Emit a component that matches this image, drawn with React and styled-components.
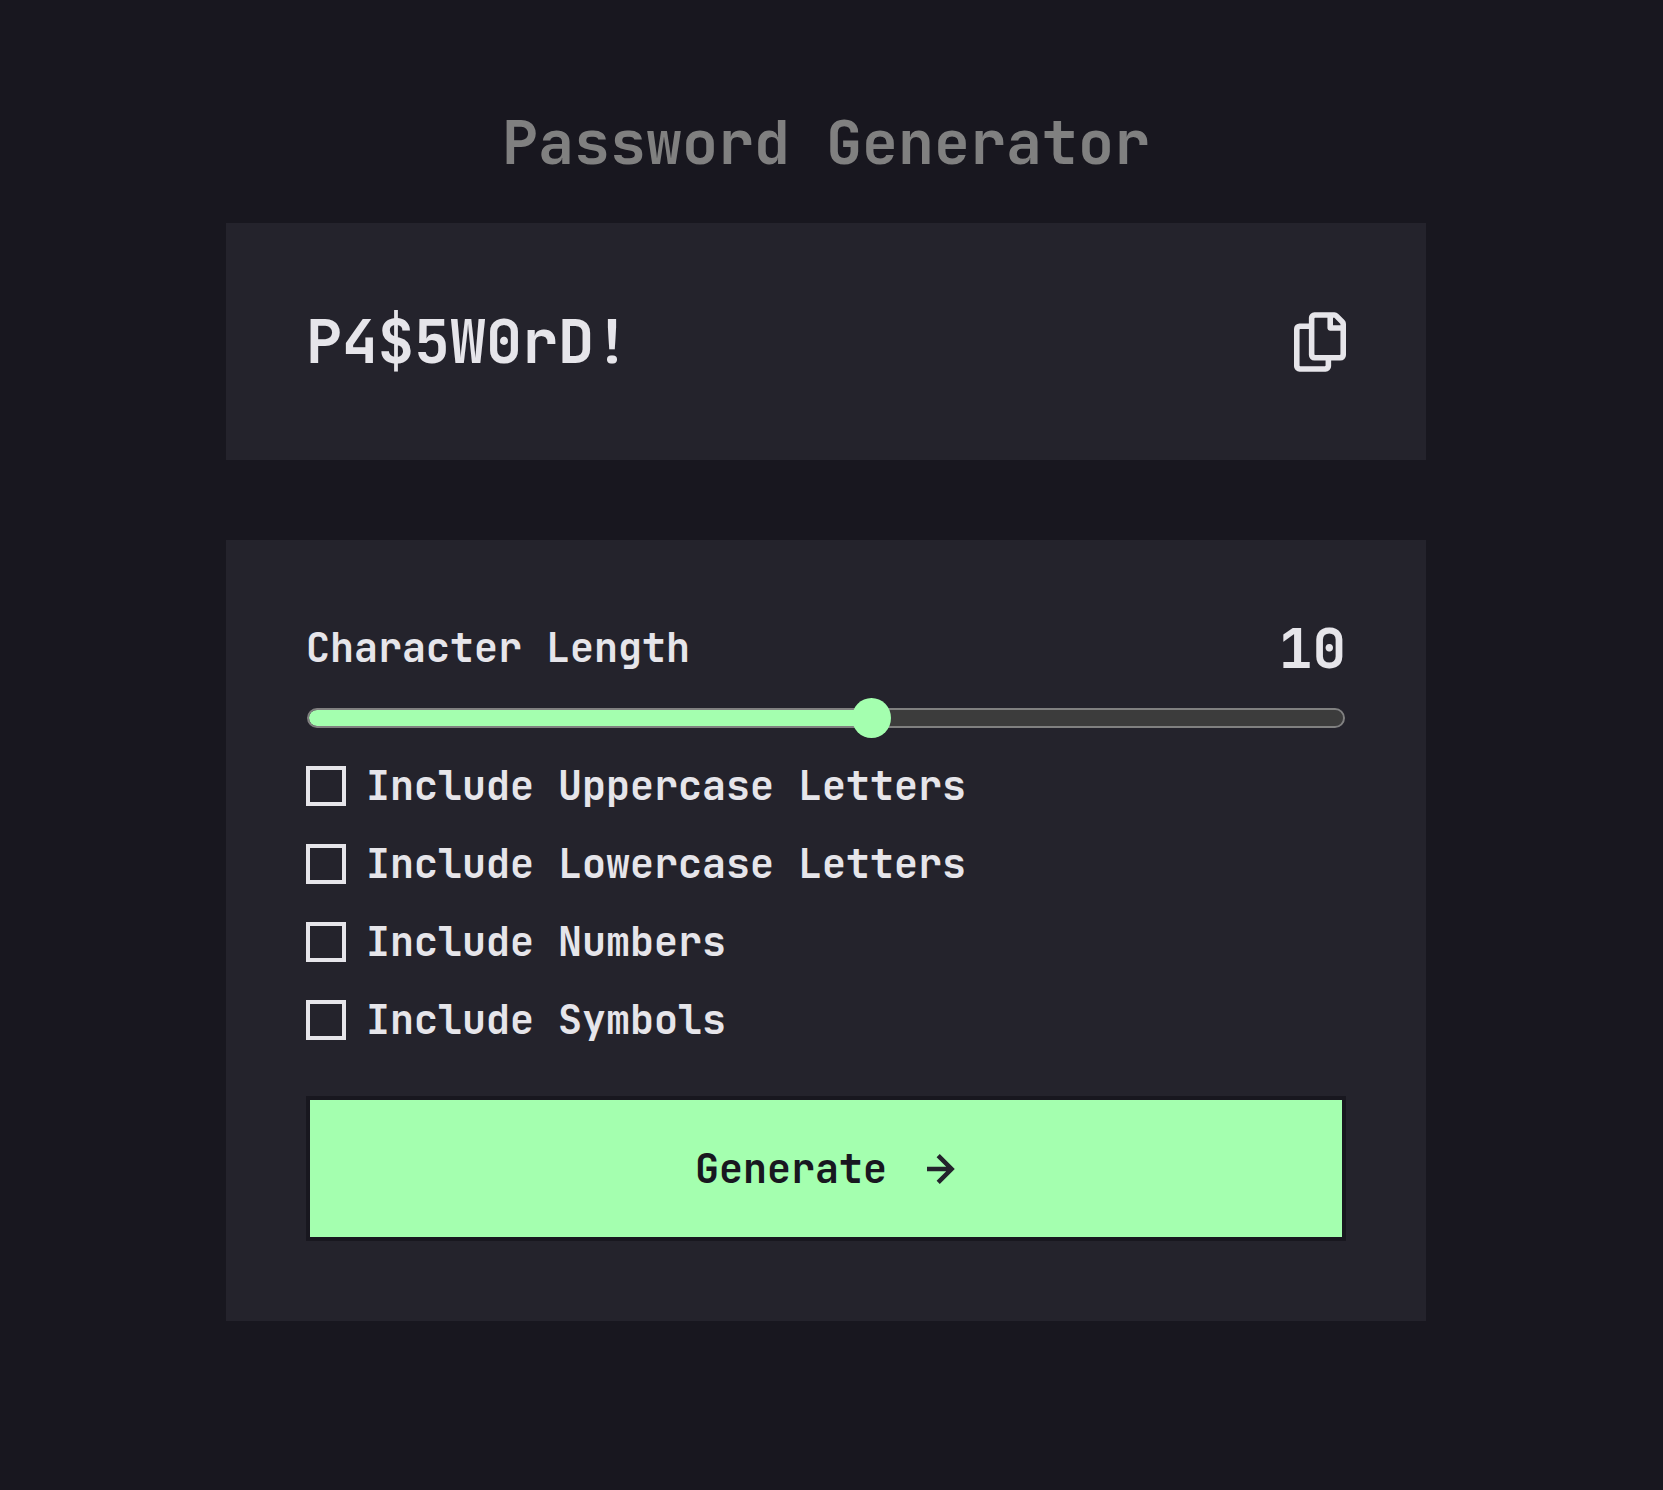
import React, { useState } from "react";
import styled, { createGlobalStyle } from "styled-components";

const color = {
  page: "#18171f",
  panel: "#24232c",
  track: "#3c3c3c",
  muted: "#808080",
  text: "#e6e5ea",
  accent: "#a4ffaf",
};

const MIN_LENGTH = 4;
const MAX_LENGTH = 15;

const GlobalStyle = createGlobalStyle`
  *, *::before, *::after { box-sizing: border-box; }
  body {
    margin: 0;
    background: ${color.page};
    color: ${color.text};
    font-family: "JetBrains Mono", "DejaVu Sans Mono", monospace;
    font-weight: 700;
  }
  button, input { font: inherit; color: inherit; }
`;

const Page = styled.main`
  min-height: 100vh;
  padding: 103px 11px 80px 0;
`;

const Column = styled.div`
  width: 100%;
  max-width: 1200px;
  margin: 0 auto;
  display: flex;
  flex-direction: column;
`;

const Title = styled.h1`
  margin: 0 0 40px;
  color: ${color.muted};
  font-size: 60px;
  font-weight: 700;
  line-height: 80px;
  text-align: center;
`;

const Panel = styled.section`
  padding: 80px;
  background: ${color.panel};
`;

const PasswordPanel = styled(Panel)`
  display: flex;
  align-items: center;
  justify-content: space-between;
  margin-bottom: 80px;
`;

const Password = styled.output`
  font-size: 60px;
  line-height: 77px;
`;

const CopyButton = styled.button`
  display: flex;
  padding: 0;
  border: 0;
  background: none;
  cursor: pointer;
`;

const LengthRow = styled.div`
  display: flex;
  align-items: center;
  justify-content: space-between;
  margin-bottom: 22px;
`;

const LengthLabel = styled.label`
  font-size: 40px;
  line-height: 56px;
`;

const LengthValue = styled.output`
  font-size: 56px;
  line-height: 56px;
`;

const Slider = styled.input`
  appearance: none;
  display: block;
  width: 100%;
  height: 40px;
  margin: 0 0 28px;
  padding: 0 1px;
  background: none;
  cursor: pointer;

  &::-webkit-slider-runnable-track {
    height: 20px;
    border: 2px solid ${color.muted};
    border-radius: 10px;
    background: linear-gradient(${color.accent}, ${color.accent}) 0 0 / var(--fill) 100% no-repeat
      padding-box ${color.track};
  }

  &::-webkit-slider-thumb {
    appearance: none;
    width: 39px;
    height: 40px;
    margin-top: -12px;
    border-radius: 50%;
    background: ${color.accent};
  }
`;

const Options = styled.div`
  display: flex;
  flex-direction: column;
  gap: 38px;
  margin-bottom: 56px;
`;

const Option = styled.label`
  display: flex;
  align-items: center;
  gap: 20px;
  font-size: 40px;
  line-height: 40px;
  cursor: pointer;
`;

const Checkbox = styled.input`
  appearance: none;
  flex: none;
  width: 40px;
  height: 40px;
  margin: 0;
  border: 4px solid ${color.text};
  cursor: pointer;

  &:checked {
    border-color: ${color.accent};
    background: ${color.accent};
  }
`;

const GenerateButton = styled.button`
  display: flex;
  align-items: center;
  justify-content: center;
  gap: 40px;
  width: 100%;
  padding: 40px;
  border: 4px solid ${color.page};
  background: ${color.accent};
  color: ${color.page};
  font-size: 40px;
  line-height: 57px;
  cursor: pointer;
`;

const CopyIcon = () => (
  <svg width="52" height="60" viewBox="0 0 21 24" fill={color.text} aria-hidden="true">
    <path d="M20.341 3.091 17.909.659A2.25 2.25 0 0 0 16.319 0H8.25A2.25 2.25 0 0 0 6 2.25V4.5H2.25A2.25 2.25 0 0 0 0 6.75v15A2.25 2.25 0 0 0 2.25 24h10.5A2.25 2.25 0 0 0 15 21.75V19.5h3.75A2.25 2.25 0 0 0 21 17.25V4.682a2.25 2.25 0 0 0-.659-1.591ZM12.469 21.75H2.53a.281.281 0 0 1-.281-.281V7.03a.281.281 0 0 1 .281-.281H6v10.5a2.25 2.25 0 0 0 2.25 2.25h4.5v1.969a.282.282 0 0 1-.281.281Zm6-4.5H8.53a.281.281 0 0 1-.281-.281V2.53a.281.281 0 0 1 .281-.281H13.5v4.125c0 .621.504 1.125 1.125 1.125h4.125v9.469a.282.282 0 0 1-.281.281Zm.281-12h-3v-3h.451c.075 0 .147.03.199.082L18.667 4.6a.281.281 0 0 1 .083.199v.451Z" />
  </svg>
);

const ArrowIcon = () => (
  <svg width="30" height="30" viewBox="0 0 12 12" fill={color.panel} aria-hidden="true">
    <path d="m5.106 12 6-6-6-6-1.265 1.265 3.841 3.84H.001v1.79h7.681l-3.841 3.84z" />
  </svg>
);

const sets = [
  { id: "uppercase", label: "Include Uppercase Letters", chars: "ABCDEFGHIJKLMNOPQRSTUVWXYZ" },
  { id: "lowercase", label: "Include Lowercase Letters", chars: "abcdefghijklmnopqrstuvwxyz" },
  { id: "numbers", label: "Include Numbers", chars: "0123456789" },
  { id: "symbols", label: "Include Symbols", chars: "!@#$%^&*()-_=+?" },
];

export default function App() {
  const [password, setPassword] = useState("P4$5W0rD!");
  const [length, setLength] = useState(10);
  const [checked, setChecked] = useState({});

  const fill = ((length - MIN_LENGTH) / (MAX_LENGTH - MIN_LENGTH)) * 100;

  const toggle = (id) => setChecked((prev) => ({ ...prev, [id]: !prev[id] }));

  const generate = () => {
    const pool = sets.filter((s) => checked[s.id]).map((s) => s.chars).join("");
    if (!pool) return;
    setPassword(
      Array.from({ length }, () => pool[Math.floor(Math.random() * pool.length)]).join("")
    );
  };

  return (
    <>
      <GlobalStyle />
      <Page>
        <Column>
          <Title>Password Generator</Title>
          <PasswordPanel>
            <Password>{password}</Password>
            <CopyButton
              type="button"
              aria-label="Copy password"
              onClick={() => navigator.clipboard?.writeText(password)}
            >
              <CopyIcon />
            </CopyButton>
          </PasswordPanel>
          <Panel>
            <LengthRow>
              <LengthLabel htmlFor="length">Character Length</LengthLabel>
              <LengthValue htmlFor="length">{length}</LengthValue>
            </LengthRow>
            <Slider
              id="length"
              type="range"
              min={MIN_LENGTH}
              max={MAX_LENGTH}
              value={length}
              onChange={(e) => setLength(Number(e.target.value))}
              style={{ "--fill": `${fill}%` }}
            />
            <Options>
              {sets.map(({ id, label }) => (
                <Option key={id} htmlFor={id}>
                  <Checkbox
                    id={id}
                    type="checkbox"
                    checked={Boolean(checked[id])}
                    onChange={() => toggle(id)}
                  />
                  {label}
                </Option>
              ))}
            </Options>
            <GenerateButton type="button" onClick={generate}>
              Generate
              <ArrowIcon />
            </GenerateButton>
          </Panel>
        </Column>
      </Page>
    </>
  );
}
